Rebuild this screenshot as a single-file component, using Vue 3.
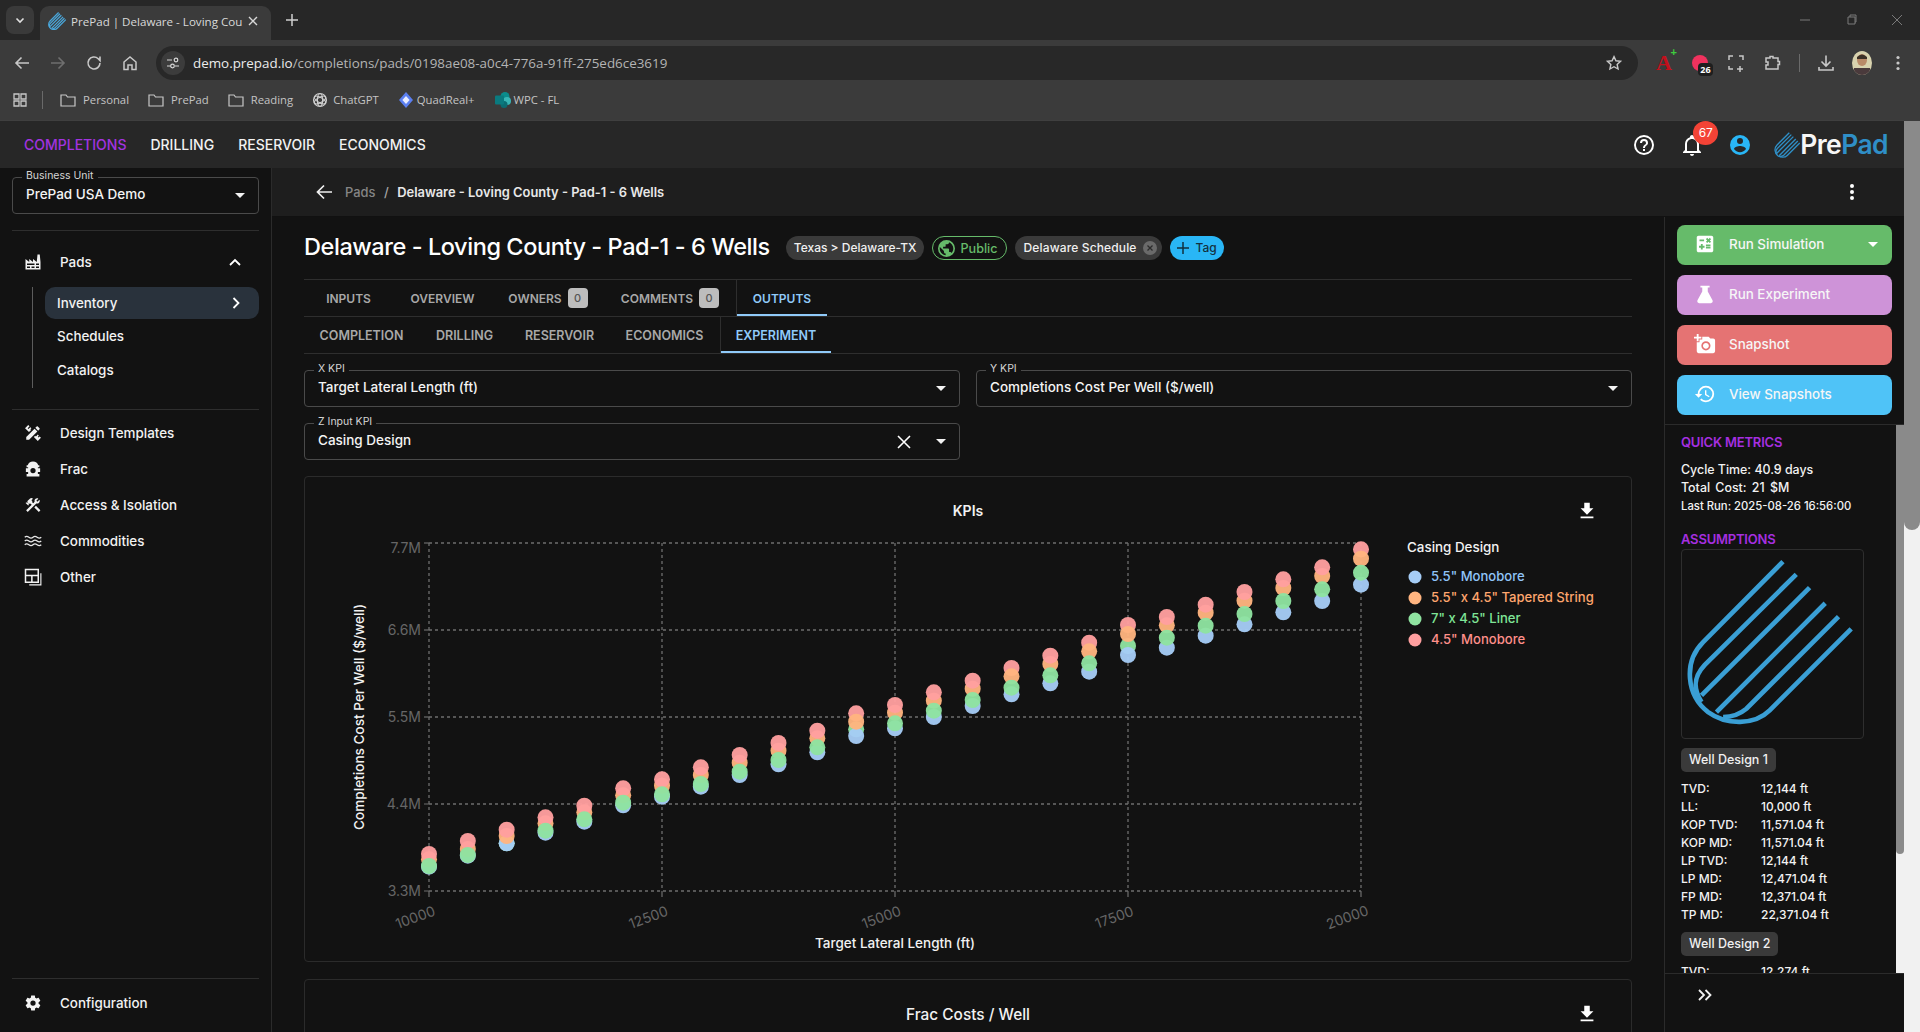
<script setup>
const P = {
  factory: 'M4,18V20H8V18H4M4,14V16H14V14H4M10,18V20H14V18H10M16,14V16H20V14H16M16,18V20H20V18H16M2,22V8L7,12V8L12,12V8L17,12L18,2H21L22,12V22H2Z',
  ruler: 'M3 17.25V21H6.75L17.81 9.93L14.06 6.18L3 17.25M22.61 18.36L18.36 22.61L13.16 17.41L14.93 15.64L15.93 16.64L18.4 14.16L19.82 15.58L18.36 17L19.42 18L20.84 16.6L22.61 18.36M6.61 10.83L1.39 5.64L5.64 1.39L7.4 3.16L4.93 5.64L6 6.7L8.46 4.22L9.88 5.64L8.46 7.05L9.46 8.05L6.61 10.83M20.71 7C21.1 6.61 21.1 6 20.71 5.59L18.37 3.29C18 2.9 17.35 2.9 16.96 3.29L15.12 5.12L18.87 8.87L20.71 7Z',
  hydrant: 'M12 2c-3.6 0-6.3 2-7 5H3.5v2.5H5.5V11H2.5v5h3v2.5H3.5V22h17v-3.5h-2V16h3v-5h-3V9.5h2V7H19c-.7-3-3.4-5-7-5Z M12 10.5a3.5 3.5 0 1 1 0 7 3.5 3.5 0 0 1 0-7Z',
  hammer: 'M13.78 15.3L19.78 21.3L21.89 19.14L15.89 13.14L13.78 15.3M17.5 10.1C17.11 10.1 16.69 10.05 16.36 9.91L4.97 21.25L2.86 19.14L10.27 11.74L8.5 9.96L7.78 10.66L6.33 9.25V12.11L5.63 12.81L2.11 9.25L2.81 8.55H5.62L4.22 7.14L7.78 3.58C8.95 2.41 10.83 2.41 12 3.58L9.89 5.74L11.3 7.14L10.59 7.85L12.38 9.63L14.2 7.75C14.06 7.42 14 7 14 6.63C14 4.66 15.56 3.11 17.5 3.11C18.09 3.11 18.61 3.25 19.08 3.53L16.41 6.2L17.91 7.7L20.58 5.03C20.86 5.5 21 6 21 6.63C21 8.55 19.45 10.1 17.5 10.1Z',
  cog: 'M12,15.5A3.5,3.5 0 0,1 8.5,12A3.5,3.5 0 0,1 12,8.5A3.5,3.5 0 0,1 15.5,12A3.5,3.5 0 0,1 12,15.5M19.43,12.97C19.47,12.65 19.5,12.33 19.5,12C19.5,11.67 19.47,11.34 19.43,11L21.54,9.37C21.73,9.22 21.78,8.95 21.66,8.73L19.66,5.27C19.54,5.05 19.27,4.96 19.05,5.05L16.56,6.05C16.04,5.66 15.5,5.32 14.87,5.07L14.5,2.42C14.46,2.18 14.25,2 14,2H10C9.75,2 9.54,2.18 9.5,2.42L9.13,5.07C8.5,5.32 7.96,5.66 7.44,6.05L4.95,5.05C4.73,4.96 4.46,5.05 4.34,5.27L2.34,8.73C2.21,8.95 2.27,9.22 2.46,9.37L4.57,11C4.53,11.34 4.5,11.67 4.5,12C4.5,12.33 4.53,12.65 4.57,12.97L2.46,14.63C2.27,14.78 2.21,15.05 2.34,15.27L4.34,18.73C4.46,18.95 4.73,19.03 4.95,18.95L7.44,17.94C7.96,18.34 8.5,18.68 9.13,18.93L9.5,21.58C9.54,21.82 9.75,22 10,22H14C14.25,22 14.46,21.82 14.5,21.58L14.87,18.93C15.5,18.67 16.04,18.34 16.56,17.94L19.05,18.95C19.27,19.03 19.54,18.95 19.66,18.73L21.66,15.27C21.78,15.05 21.73,14.78 21.54,14.63L19.43,12.97Z',
  calc: 'M5 3H19C20.1 3 21 3.9 21 5V19C21 20.1 20.1 21 19 21H5C3.9 21 3 20.1 3 19V5C3 3.9 3.9 3 5 3M6 7V9H11V7H6M13 15V17H18V15H13M13 12.5V14.5H18V12.5H13M7.5 18H9.5V16H11.5V14H9.5V12H7.5V14H5.5V16H7.5V18M14.41 10.95L15.82 9.54L17.23 10.95L18.64 9.54L17.23 8.12L18.64 6.71L17.23 5.29L15.82 6.71L14.41 5.29L13 6.71L14.41 8.12L13 9.54L14.41 10.95Z',
  flask: 'M7 3h10v2h-2v4.3l5.2 9.6c.7 1.4-.2 3.1-1.8 3.1H5.6c-1.6 0-2.5-1.7-1.8-3.1L9 9.3V5H7z',
  camera: 'M3,4V1H5V4H8V6H5V9H3V6H0V4M6,10V7H9V4H16L17.83,6H21A2,2 0 0,1 23,8V20A2,2 0 0,1 21,22H5A2,2 0 0,1 3,20V10M13,19A5,5 0 0,0 18,14A5,5 0 0,0 13,9A5,5 0 0,0 8,14A5,5 0 0,0 13,19M9.8,14C9.8,15.77 11.23,17.2 13,17.2C14.77,17.2 16.2,15.77 16.2,14C16.2,12.23 14.77,10.8 13,10.8C11.23,10.8 9.8,12.23 9.8,14Z',
  history: 'M13.5,8H12V13L16.28,15.54L17,14.33L13.5,12.25V8M13,3A9,9 0 0,0 4,12H1L4.96,16.03L9,12H6A7,7 0 0,1 13,5A7,7 0 0,1 20,12A7,7 0 0,1 13,19C11.07,19 9.32,18.21 8.06,16.94L6.64,18.36C8.27,20 10.5,21 13,21A9,9 0 0,0 22,12A9,9 0 0,0 13,3',
  help: 'M11,18H13V16H11V18M12,2A10,10 0 0,0 2,12A10,10 0 0,0 12,22A10,10 0 0,0 22,12A10,10 0 0,0 12,2M12,20C7.59,20 4,16.41 4,12C4,7.59 7.59,4 12,4C16.41,4 20,7.59 20,12C20,16.41 16.41,20 12,20M12,6A4,4 0 0,0 8,10H10A2,2 0 0,1 12,8A2,2 0 0,1 14,10C14,12 11,11.75 11,15H13C13,12.75 16,12.5 16,10A4,4 0 0,0 12,6Z',
  bell: 'M10 21H14C14 22.1 13.1 23 12 23S10 22.1 10 21M21 19V20H3V19L5 17V11C5 7.9 7 5.2 10 4.3V4C10 2.9 10.9 2 12 2S14 2.9 14 4V4.3C17 5.2 19 7.9 19 11V17L21 19M17 11C17 8.2 14.8 6 12 6S7 8.2 7 11V18H17V11Z',
  user: 'M12,19.2C9.5,19.2 7.29,17.92 6,16C6.03,14 10,12.9 12,12.9C14,12.9 17.97,14 18,16C16.71,17.92 14.5,19.2 12,19.2M12,5A3,3 0 0,1 15,8A3,3 0 0,1 12,11A3,3 0 0,1 9,8A3,3 0 0,1 12,5M12,2A10,10 0 0,0 2,12A10,10 0 0,0 12,22A10,10 0 0,0 22,12A10,10 0 0,0 12,2Z',
  download: 'M5,20H19V18H5M19,9H15V3H9V9H5L12,16L19,9Z',
  earth: 'M17.9,17.39C17.64,16.59 16.89,16 16,16H15V13A1,1 0 0,0 14,12H8V10H10A1,1 0 0,0 11,9V7H13A2,2 0 0,0 15,5V4.59C17.93,5.77 20,8.64 20,12C20,14.08 19.2,15.97 17.9,17.39M11,19.93C7.05,19.44 4,16.08 4,12C4,11.38 4.08,10.78 4.21,10.21L9,15V16A2,2 0 0,0 11,18M12,2A10,10 0 0,0 2,12A10,10 0 0,0 12,22A10,10 0 0,0 22,12A10,10 0 0,0 12,2Z',
  kebab: 'M12,16A2,2 0 0,1 14,18A2,2 0 0,1 12,20A2,2 0 0,1 10,18A2,2 0 0,1 12,16M12,10A2,2 0 0,1 14,12A2,2 0 0,1 12,14A2,2 0 0,1 10,12A2,2 0 0,1 12,10M12,4A2,2 0 0,1 14,6A2,2 0 0,1 12,8A2,2 0 0,1 10,6A2,2 0 0,1 12,4Z',
}

const mark = [
  'M370 68 L130 310 C70 370 80 470 145 520 C200 560 285 560 330 515 L575 270',
  'M410 106 L135 378 C100 415 100 450 125 490',
  'M450 146 L125 470',
  'M497 193 L170 520',
  'M537 233 L260 510 Q230 535 190 535',
]

const navItems = [
  { label: 'Design Templates', d: P.ruler },
  { label: 'Frac', d: P.hydrant, evenodd: true },
  { label: 'Access & Isolation', d: P.hammer },
  { label: 'Commodities', waves: true },
  { label: 'Other', dock: true },
]

const tabs = [
  { label: 'INPUTS', w: 89 },
  { label: 'OVERVIEW', w: 99 },
  { label: 'OWNERS', w: 112, badge: 0 },
  { label: 'COMMENTS', w: 133, badge: 0, sep: true },
  { label: 'OUTPUTS', w: 90, active: true },
]
const subTabs = [
  { label: 'COMPLETION', w: 115 },
  { label: 'DRILLING', w: 91 },
  { label: 'RESERVOIR', w: 99 },
  { label: 'ECONOMICS', w: 112, sep: true },
  { label: 'EXPERIMENT', w: 110, active: true },
]

const bookmarks = [
  { label: 'Personal', type: 'folder' },
  { label: 'PrePad', type: 'folder' },
  { label: 'Reading', type: 'folder' },
  { label: 'ChatGPT', type: 'gpt' },
  { label: 'QuadReal+', type: 'quad' },
  { label: 'WPC - FL', type: 'share' },
]

const buttons = [
  { label: 'Run Simulation', d: P.calc, cls: 'green', caret: true },
  { label: 'Run Experiment', d: P.flask, cls: 'purple' },
  { label: 'Snapshot', d: P.camera, cls: 'red' },
  { label: 'View Snapshots', d: P.history, cls: 'blue' },
]

const wells = [
  ['TVD:', '12,144 ft'], ['LL:', '10,000 ft'], ['KOP TVD:', '11,571.04 ft'], ['KOP MD:', '11,571.04 ft'],
  ['LP TVD:', '12,144 ft'], ['LP MD:', '12,471.04 ft'], ['FP MD:', '12,371.04 ft'], ['TP MD:', '22,371.04 ft'],
]

const series = {
  blue: { color: '#a5ccf6', text: '#90c4f9', name: '5.5" Monobore', y: [866.7,855.7,843.3,832.7,821.7,805.3,796.7,786.7,775,764.3,752.3,736,728.3,717,706,694.3,683.3,671.7,655,647.7,635.7,624.3,612.3,601,584.7] },
  orange: { color: '#ffb47f', text: '#ffa66e', name: '5.5" x 4.5" Tapered String', y: [859.3,849,836,823.3,812.3,795.3,785.7,775,762.7,750.7,738.3,721.7,712.7,700.7,688.7,676.3,664,651.3,634,625.3,612.7,600.7,588,576,558.7] },
  green: { color: '#8fe3a0', text: '#7fe597', name: '7" x 4.5" Liner', y: [866,855,843.3,830.7,819.3,802.7,794.3,784,771.7,760,747.3,729.3,723.3,710.7,700,687.7,675.3,663.3,646,637.7,625.7,614,601,589.3,572.7] },
  pink: { color: '#ff9f9f', text: '#ff8f8a', name: '4.5" Monobore', y: [854,841,829.7,817.3,805.7,788.3,779.3,767.3,755,743,730.7,713.3,705,692.3,680.7,668,655.7,642.7,625,617,604.7,592,579.3,567.3,549.3] },
}
const legend = ['blue', 'orange', 'green', 'pink'].map((k) => series[k])

const orangeOnTop = new Set([11, 15, 17, 18, 24])
const blueOverGreen = new Set([2, 11, 18])
const points = []
for (let i = 0; i < 25; i++) {
  const top = orangeOnTop.has(i) ? ['pink', 'orange'] : ['orange', 'pink']
  const order = blueOverGreen.has(i) ? ['green', 'blue', ...top] : ['blue', ...top, 'green']
  for (const k of order) {
    points.push({ key: `${i}-${k}`, cx: 429 + (932 / 24) * i, cy: series[k].y[i], fill: series[k].color })
  }
}
const gridY = [
  { y: 543, label: '7.7M', ly: 553 },
  { y: 630, label: '6.6M', ly: 635 },
  { y: 717, label: '5.5M', ly: 722 },
  { y: 804, label: '4.4M', ly: 809 },
  { y: 891, label: '3.3M', ly: 896 },
]
const gridX = [
  { x: 429, label: '10000' },
  { x: 662, label: '12500' },
  { x: 895, label: '15000' },
  { x: 1128, label: '17500' },
  { x: 1361, label: '20000' },
]
</script>

<template>
  <div class="page">
    <header class="chrome">
      <div class="tabstrip">
        <div class="tab-menu">
          <svg width="12" height="12" viewBox="0 0 12 12"><path d="M2.5 4.5 6 8l3.5-3.5" fill="none" stroke="#e0e0e0" stroke-width="1.6"/></svg>
        </div>
        <div class="browser-tab">
          <svg class="fav" width="18" height="18" viewBox="70 60 510 500"><path v-for="d in mark" :key="d" :d="d" fill="none" stroke="#4aa8dc" stroke-width="34"/></svg>
          <span class="tab-title">PrePad | Delaware - Loving Cou</span>
          <svg width="12" height="12" viewBox="0 0 12 12"><path d="M2 2l8 8M10 2l-8 8" stroke="#d8d8d8" stroke-width="1.4"/></svg>
        </div>
        <svg class="newtab" width="14" height="14" viewBox="0 0 14 14"><path d="M7 1v12M1 7h12" stroke="#cfcfcf" stroke-width="1.5"/></svg>
        <div class="winctl">
          <svg width="12" height="12" viewBox="0 0 12 12"><path d="M1 6h10" stroke="#7a7a7a"/></svg>
          <svg width="12" height="12" viewBox="0 0 12 12"><path d="M3 3h7v7H3zM5 3V1h6v7h-1" fill="none" stroke="#7a7a7a"/></svg>
          <svg width="12" height="12" viewBox="0 0 12 12"><path d="M1 1l10 10M11 1 1 11" stroke="#7a7a7a"/></svg>
        </div>
      </div>
      <div class="toolbar">
        <div class="tool-nav">
          <svg width="18" height="18" viewBox="0 0 18 18"><path d="M16 9H3M8.5 3.5 3 9l5.5 5.5" fill="none" stroke="#c8c8c8" stroke-width="1.6"/></svg>
          <svg width="18" height="18" viewBox="0 0 18 18"><path d="M2 9h13M9.5 3.5 15 9l-5.5 5.5" fill="none" stroke="#6f6f6f" stroke-width="1.6"/></svg>
          <svg width="18" height="18" viewBox="0 0 18 18"><path d="M15 9a6 6 0 1 1-1.8-4.3L15 6.5V2.5" fill="none" stroke="#c8c8c8" stroke-width="1.6"/></svg>
          <svg width="18" height="18" viewBox="0 0 18 18"><path d="M3 8 9 3l6 5v7.5h-4v-4.5H7v4.5H3z" fill="none" stroke="#c8c8c8" stroke-width="1.5"/></svg>
        </div>
        <div class="omnibox">
          <span class="site-info">
            <svg width="14" height="14" viewBox="0 0 14 14"><path d="M1 4h5M9 10h4M1 10h4" stroke="#d8d8d8" stroke-width="1.2"/><circle cx="10" cy="4" r="1.8" fill="none" stroke="#d8d8d8" stroke-width="1.2"/><circle cx="6.5" cy="10" r="1.8" fill="none" stroke="#d8d8d8" stroke-width="1.2"/></svg>
          </span>
          <span class="url"><span class="url-host">demo.prepad.io</span>/completions/pads/0198ae08-a0c4-776a-91ff-275ed6ce3619</span>
          <svg width="18" height="18" viewBox="0 0 24 24"><path d="M12 3.5l2.6 5.6 6.1.7-4.5 4.2 1.2 6L12 17l-5.4 3 1.2-6-4.5-4.2 6.1-.7z" fill="none" stroke="#c8c8c8" stroke-width="1.9"/></svg>
        </div>
        <div class="ext-row">
          <span class="slot"><span class="ext-a">A<i>+</i></span></span>
          <span class="slot"><span class="ext-pin"><span class="ext-num">26</span></span></span>
          <span class="slot"><svg width="18" height="18" viewBox="0 0 18 18"><path d="M6 2H2v4M2 12v3h4M12 2h4v4M10 15h6M13 12v6" fill="none" stroke="#c8c8c8" stroke-width="1.5"/></svg></span>
          <span class="slot"><svg width="18" height="18" viewBox="0 0 18 18"><path d="M3 4h4V2.5h3V4h5v3.5h1.5v3H15V15H3v-4h2V8H3z" fill="none" stroke="#c8c8c8" stroke-width="1.5"/></svg></span>
          <span class="slot narrow"><span class="ext-sep"></span></span>
          <span class="slot"><svg width="18" height="18" viewBox="0 0 18 18"><path d="M9 1.5v10M4.5 7.5 9 12l4.5-4.5M2 13v3h14v-3" fill="none" stroke="#c8c8c8" stroke-width="1.6"/></svg></span>
          <span class="slot"><svg width="20" height="24" viewBox="0 0 20 24"><defs><clipPath id="av"><ellipse cx="10" cy="12" rx="10" ry="12"/></clipPath></defs><g clip-path="url(#av)"><rect width="20" height="24" fill="#d8d2ae"/><ellipse cx="10" cy="9" rx="5" ry="6" fill="#b98a68"/><path d="M5 6q5-5 10 0v2H5z" fill="#3c3026"/><rect x="2" y="17" width="16" height="7" fill="#4a3a3c"/></g></svg></span>
          <span class="slot"><svg width="16" height="18" viewBox="0 0 16 18"><circle cx="8" cy="3.5" r="1.6" fill="#c8c8c8"/><circle cx="8" cy="9" r="1.6" fill="#c8c8c8"/><circle cx="8" cy="14.5" r="1.6" fill="#c8c8c8"/></svg></span>
        </div>
      </div>
      <div class="bookmarks">
        <svg width="16" height="16" viewBox="0 0 16 16"><path d="M2 2h5v5H2zM9 2h5v5H9zM2 9h5v5H2zM9 9h5v5H9z" fill="none" stroke="#c8c8c8" stroke-width="1.3"/></svg>
        <span class="bm-sep"></span>
        <span v-for="b in bookmarks" :key="b.label" class="bm" :class="'bm-' + b.type">
          <svg v-if="b.type === 'folder'" width="16" height="14" viewBox="0 0 16 14"><path d="M1 2h5l1.5 2H15v9H1z" fill="none" stroke="#c8c8c8" stroke-width="1.2"/></svg>
          <svg v-else-if="b.type === 'gpt'" width="16" height="16" viewBox="0 0 16 16"><g fill="none" stroke="#cfcfcf" stroke-width="1.1"><circle cx="8" cy="8" r="6.5"/><ellipse cx="8" cy="8" rx="6.2" ry="2.6" transform="rotate(30 8 8)"/><ellipse cx="8" cy="8" rx="6.2" ry="2.6" transform="rotate(90 8 8)"/><ellipse cx="8" cy="8" rx="6.2" ry="2.6" transform="rotate(150 8 8)"/></g></svg>
          <svg v-else-if="b.type === 'quad'" width="16" height="18" viewBox="0 0 16 18"><path d="M8 1l7 8-7 8-7-8z" fill="#5b7ff0"/><path d="M8 5l3.6 4L8 13 4.4 9z" fill="#e8ecff"/></svg>
          <svg v-else width="18" height="18" viewBox="0 0 18 18"><circle cx="11" cy="5.5" r="4.5" fill="#0b8c8c"/><circle cx="13" cy="10" r="4" fill="#38b6b6"/><circle cx="10" cy="13.5" r="3.5" fill="#0b6c72"/><rect x="1" y="4.5" width="9" height="9" rx="1" fill="#0a7a7f"/></svg>
          <span>{{ b.label }}</span>
        </span>
      </div>
    </header>

    <div class="app">
      <div class="app-col">
        <div class="appbar">
          <nav class="appnav">
            <span class="nav-active">COMPLETIONS</span>
            <span>DRILLING</span>
            <span>RESERVOIR</span>
            <span>ECONOMICS</span>
          </nav>
          <div class="appbar-right">
            <svg class="ico" width="24" height="24" viewBox="0 0 24 24"><path :d="P.help" fill="#fff"/></svg>
            <span class="bell">
              <svg width="24" height="24" viewBox="0 0 24 24"><path :d="P.bell" fill="#fff"/></svg>
              <span class="bell-badge">67</span>
            </span>
            <svg width="24" height="24" viewBox="0 0 24 24"><path :d="P.user" fill="#29b6f6"/></svg>
            <span class="brand">
              <svg width="26" height="26" viewBox="70 60 510 500"><path v-for="d in mark" :key="d" :d="d" fill="none" stroke="#2f8fc7" stroke-width="26"/></svg>
              <span class="brand-text">Pre<b>Pad</b></span>
            </span>
          </div>
        </div>

        <div class="body">
          <aside class="sidebar">
            <div class="field bu">
              <label>Business Unit</label>
              <span class="field-value">PrePad USA Demo</span>
              <span class="caret"></span>
            </div>
            <hr class="side-div first" />
            <div class="nav-row">
              <svg class="nav-ico" width="18" height="18" viewBox="0 0 24 24"><path :d="P.factory" fill="#f2f2f2"/></svg>
              <span>Pads</span>
              <svg class="nav-chev" width="14" height="14" viewBox="0 0 14 14"><path d="M2 10l5-5 5 5" fill="none" stroke="#fff" stroke-width="1.8"/></svg>
            </div>
            <div class="subnav">
              <div class="sub-item current">
                <span>Inventory</span>
                <svg width="14" height="14" viewBox="0 0 14 14"><path d="M4.5 2l5 5-5 5" fill="none" stroke="#fff" stroke-width="1.8"/></svg>
              </div>
              <div class="sub-item">Schedules</div>
              <div class="sub-item">Catalogs</div>
            </div>
            <hr class="side-div second" />
            <div v-for="n in navItems" :key="n.label" class="nav-row tight">
              <svg class="nav-ico" width="18" height="18" viewBox="0 0 24 24">
                <path v-if="n.d" :d="n.d" fill="#f2f2f2" :fill-rule="n.evenodd ? 'evenodd' : 'nonzero'"/>
                <g v-else-if="n.waves" fill="none" stroke="#e8e8e8" stroke-width="1.6">
                  <path d="M1 7q2.5-2.5 5.5 0t5.5 0 5.5 0 5.5 0"/>
                  <path d="M1 12q2.5-2.5 5.5 0t5.5 0 5.5 0 5.5 0"/>
                  <path d="M1 17q2.5-2.5 5.5 0t5.5 0 5.5 0 5.5 0"/>
                </g>
                <g v-else fill="none" stroke="#f2f2f2" stroke-width="2">
                  <path d="M2 2h17v17H2zM2 10h17M10.5 10v9"/>
                  <path d="M22.5 7v15.5H7" stroke-width="1.5"/>
                </g>
              </svg>
              <span>{{ n.label }}</span>
            </div>
            <div class="side-foot">
              <div class="nav-row foot">
                <svg class="nav-ico" width="18" height="18" viewBox="0 0 24 24"><path :d="P.cog" fill="#f2f2f2"/></svg>
                <span>Configuration</span>
              </div>
            </div>
          </aside>

          <div class="workspace">
            <div class="crumbs">
              <svg width="18" height="18" viewBox="0 0 18 18"><path d="M17 9H2.5M9 2.5 2.5 9 9 15.5" fill="none" stroke="#f0f0f0" stroke-width="1.7"/></svg>
              <span class="crumb-muted">Pads</span>
              <span class="crumb-slash">/</span>
              <span class="crumb-cur">Delaware - Loving County - Pad-1 - 6 Wells</span>
              <svg class="crumb-kebab" width="24" height="24" viewBox="0 0 24 24"><path :d="P.kebab" fill="#fff"/></svg>
            </div>
            <div class="work-row">
              <main class="content">
                <div class="title-row">
                  <h1>Delaware - Loving County - Pad-1 - 6 Wells</h1>
                  <span class="chip">Texas &gt; Delaware-TX</span>
                  <span class="chip public">
                    <svg width="17" height="17" viewBox="2 2 20 20"><path :d="P.earth" fill="#66bb6a"/></svg>
                    Public
                  </span>
                  <span class="chip sched">
                    Delaware Schedule
                    <svg width="14" height="14" viewBox="0 0 14 14"><circle cx="7" cy="7" r="7" fill="#6a6a6a"/><path d="M4.5 4.5l5 5M9.5 4.5l-5 5" stroke="#2c2c2c" stroke-width="1.3"/></svg>
                  </span>
                  <span class="chip tag">
                    <svg width="12" height="12" viewBox="0 0 12 12"><path d="M6 0v12M0 6h12" stroke="#10303f" stroke-width="1.5"/></svg>
                    Tag
                  </span>
                </div>

                <div class="tabs top">
                  <div v-for="t in tabs" :key="t.label" class="t" :class="{ on: t.active, sep: t.sep }" :style="{ width: t.w + 'px' }">
                    {{ t.label }}<span v-if="t.badge !== undefined" class="t-badge">{{ t.badge }}</span>
                  </div>
                </div>
                <div class="tabs sub">
                  <div v-for="t in subTabs" :key="t.label" class="t" :class="{ on: t.active, sep: t.sep }" :style="{ width: t.w + 'px' }">{{ t.label }}</div>
                </div>

                <div class="fields">
                  <div class="field">
                    <label>X KPI</label>
                    <span class="field-value">Target Lateral Length (ft)</span>
                    <span class="caret"></span>
                  </div>
                  <div class="field">
                    <label>Y KPI</label>
                    <span class="field-value">Completions Cost Per Well ($/well)</span>
                    <span class="caret"></span>
                  </div>
                  <div class="field">
                    <label>Z Input KPI</label>
                    <span class="field-value">Casing Design</span>
                    <svg class="clear" width="16" height="16" viewBox="0 0 16 16"><path d="M2 2l12 12M14 2 2 14" stroke="#fff" stroke-width="1.6"/></svg>
                    <span class="caret"></span>
                  </div>
                </div>

                <section class="card chart-card">
                  <div class="card-head">
                    <span class="card-title">KPIs</span>
                    <svg class="card-dl" width="22" height="22" viewBox="0 0 24 24"><path :d="P.download" fill="#fff"/></svg>
                  </div>
                  <svg class="chart" width="1326" height="450" viewBox="305 512 1326 450">
                    <g fill="none" stroke="#6e6e6e" stroke-width="1.3" stroke-dasharray="3 3">
                      <line v-for="g in gridY" :key="g.y" x1="429" x2="1361" :y1="g.y" :y2="g.y"/>
                      <line v-for="g in gridX" :key="g.x" :x1="g.x" :x2="g.x" y1="543" y2="891"/>
                    </g>
                    <g stroke="#6e6e6e" stroke-width="1.2">
                      <line v-for="g in gridY" :key="'t' + g.y" x1="424" x2="429" :y1="g.y" :y2="g.y"/>
                      <line v-for="g in gridX" :key="'t' + g.x" :x1="g.x" :x2="g.x" y1="891" y2="897"/>
                    </g>
                    <circle v-for="p in points" :key="p.key" :cx="p.cx" :cy="p.cy" r="8" :fill="p.fill" fill-opacity=".96"/>
                    <text v-for="g in gridY" :key="'l' + g.y" class="axis" x="421" :y="g.ly" text-anchor="end">{{ g.label }}</text>
                    <text v-for="g in gridX" :key="'l' + g.x" class="axis" text-anchor="middle" :transform="`translate(${g.x - 12} 922) rotate(-20)`">{{ g.label }}</text>
                    <text class="axis-title" x="895" y="948" text-anchor="middle">Target Lateral Length (ft)</text>
                    <text class="axis-title ytitle" text-anchor="middle" transform="translate(364 717) rotate(-90)">Completions Cost Per Well ($/well)</text>
                    <text class="legend-title" x="1407" y="552">Casing Design</text>
                    <g v-for="(s, i) in legend" :key="s.name">
                      <circle cx="1415" :cy="577 + i * 21" r="6.5" :fill="s.color"/>
                      <text class="legend-text" x="1431" :y="581 + i * 21" :fill="s.text">{{ s.name }}</text>
                    </g>
                  </svg>
                </section>

                <section class="card next-card">
                  <div class="card-head">
                    <span class="card-title big">Frac Costs / Well</span>
                    <svg class="card-dl" width="22" height="22" viewBox="0 0 24 24"><path :d="P.download" fill="#fff"/></svg>
                  </div>
                </section>
              </main>

              <aside class="panel">
                <div class="panel-actions">
                  <button v-for="b in buttons" :key="b.label" class="act" :class="b.cls">
                    <svg width="22" height="22" viewBox="0 0 24 24"><path :d="b.d" fill="#fff"/></svg>
                    <span>{{ b.label }}</span>
                    <span v-if="b.caret" class="caret white"></span>
                  </button>
                </div>
                <div class="panel-scroll">
                  <div class="panel-inner">
                    <h3>QUICK METRICS</h3>
                    <p class="metric m1">Cycle Time: 40.9 days</p>
                    <p class="metric m2">Total Cost: 21 $M</p>
                    <p class="metric m3">Last Run: 2025-08-26 16:56:00</p>
                    <h3 class="assump">ASSUMPTIONS</h3>
                    <div class="logo-box">
                      <svg width="182" height="189" viewBox="64 30 546 568"><path v-for="d in mark" :key="d" :d="d" fill="none" stroke="#3a9fd5" stroke-width="14"/></svg>
                    </div>
                    <span class="design">Well Design 1</span>
                    <div v-for="w in wells" :key="w[0]" class="well-row"><span>{{ w[0] }}</span><span>{{ w[1] }}</span></div>
                    <span class="design second">Well Design 2</span>
                    <div class="well-row"><span>TVD:</span><span>12,274 ft</span></div>
                  </div>
                  <div class="thin-track"><div class="thin-thumb"></div></div>
                </div>
                <div class="panel-foot">
                  <svg width="16" height="14" viewBox="0 0 16 14"><path d="M2 2l5 5-5 5M8.5 2l5 5-5 5" fill="none" stroke="#f2f2f2" stroke-width="1.8"/></svg>
                </div>
              </aside>
            </div>
          </div>
        </div>
      </div>
      <div class="page-track"><div class="page-thumb"></div></div>
    </div>
  </div>
</template>

<style>
html, body { margin: 0; height: 100%; overflow: hidden; background: #121212; }
</style>

<style scoped>
.page { height: 1032px; display: flex; flex-direction: column; overflow: hidden; background: #121212; color: #f2f2f2; font-family: Inter, "Liberation Sans", sans-serif; font-size: 13.4px; }
.chrome { font-family: "Open Sans", "Liberation Sans", sans-serif; flex: none; height: 121px; background: #3b3b3b; }
.tabstrip { height: 40px; background: #272727; display: flex; align-items: flex-start; position: relative; }
.tab-menu { width: 28px; height: 28px; margin: 6px 6px 0; background: #3a3a3a; border-radius: 8px; display: flex; align-items: center; justify-content: center; }
.browser-tab { width: 231px; height: 34px; margin-top: 6px; background: #3b3b3b; border-radius: 9px 9px 0 0; display: flex; align-items: center; padding: 0 8px 4px; box-sizing: border-box; font-size: 11.6px; color: #d9d9d9; }
.fav { flex: none; }
.tab-title { width: 167px; margin: 0 9px 0 5px; white-space: nowrap; }
.newtab { margin: 13px 0 0 14px; }
.winctl { margin-left: auto; display: flex; gap: 34px; padding: 14px 17px 0 0; }
.toolbar { height: 40px; display: flex; align-items: flex-end; }
.tool-nav { width: 156px; height: 34px; box-sizing: border-box; padding-left: 13px; display: flex; align-items: center; gap: 18px; }
.omnibox { width: 1482px; height: 34px; box-sizing: border-box; background: #282828; border-radius: 17px; display: flex; align-items: center; padding: 0 15px 0 5px; }
.site-info { width: 24px; height: 24px; border-radius: 50%; background: #3c3c3c; display: flex; align-items: center; justify-content: center; }
.url { flex: 1; margin-left: 8px; font-size: 13.4px; color: #b4b4b4; }
.url-host { color: #ececec; }
.ext-row { flex: 1; height: 34px; display: flex; align-items: center; padding-left: 8px; }
.slot { width: 36px; flex: none; display: flex; align-items: center; justify-content: center; }
.slot.narrow { width: 18px; }
.ext-a { width: 18px; font: 700 22px "Liberation Serif", serif; color: #c4101c; position: relative; text-align: center; line-height: 24px; }
.ext-a i { position: absolute; top: -5px; right: -4px; font: 700 11px "Liberation Sans", sans-serif; color: #3ecb3e; }
.ext-pin { width: 16px; height: 16px; border-radius: 50%; background: #f0325e; position: relative; }
.ext-num { position: absolute; left: 6px; top: 8px; width: 15px; height: 13px; background: #1e1e1e; border-radius: 4px; font-size: 9px; font-weight: 700; color: #fff; text-align: center; line-height: 13px; }
.ext-sep { width: 1px; height: 18px; background: #6a6a6a; }
.bookmarks { height: 40px; box-sizing: border-box; padding: 0 0 1px 12px; display: flex; align-items: center; font-size: 11.3px; color: #c4c4c4; }
.bm-sep { width: 1px; height: 18px; background: #6a6a6a; margin: 0 17px 0 14px; }
.bm { display: flex; align-items: center; gap: 7px; margin-right: 19px; }
.bm-gpt { gap: 5px; }
.bm-quad { gap: 3px; }
.bm-share { gap: 2px; }

.app { flex: 1; min-height: 0; display: flex; }
.app-col { flex: 1; min-width: 0; display: flex; flex-direction: column; }
.page-track { width: 16px; background: #f1f1f1; flex: none; }
.page-thumb { height: 409px; background: #8a8a8a; border-radius: 0 0 8px 8px; }
.appbar { height: 47px; flex: none; background: #272727; border-top: 1px solid #3f3f3f; box-sizing: content-box; display: flex; align-items: center; justify-content: space-between; margin-top: -1px; }
.appnav { display: flex; gap: 24px; padding-left: 24px; font-size: 14px; font-weight: 500; color: #f2f2f2; }
.nav-active { color: #a233e0; }
.appbar-right { display: flex; align-items: center; gap: 24px; padding-right: 16px; }
.bell { position: relative; display: flex; }
.bell-badge { position: absolute; left: 13px; top: -12px; width: 25px; height: 24px; border-radius: 50%; background: #f44336; color: #fff; font-size: 12px; display: flex; align-items: center; justify-content: center; }
.brand { display: flex; align-items: center; gap: 0; margin-left: -2px; }
.brand-text { font-size: 26.5px; font-weight: 600; color: #f6f6f6; letter-spacing: -.6px; line-height: 1; }
.brand-text b { font-weight: 600; color: #2f8fc7; }

.body { flex: 1; min-height: 0; display: flex; }
.sidebar { width: 272px; flex: none; box-sizing: border-box; border-right: 1px solid #2b2b2b; padding: 9px 12px 0; display: flex; flex-direction: column; }
.field { position: relative; height: 37px; box-sizing: border-box; border: 1px solid #4a4a4a; border-radius: 4px; display: flex; align-items: center; padding: 0 13px; }
.field label { position: absolute; top: -8px; left: 9px; padding: 0 4px; background: #121212; font-size: 10.5px; line-height: 12px; color: #d5d5d5; }
.field-value { flex: 1; font-size: 13.5px; font-weight: 500; color: #f4f4f4; padding-bottom: 3px; }
.caret { width: 0; height: 0; border-left: 5px solid transparent; border-right: 5px solid transparent; border-top: 5px solid #f2f2f2; }
.caret.white { border-top-color: #fff; margin-left: auto; }
.side-div { border: 0; border-top: 1px solid #2e2e2e; margin: 0; }
.side-div.first { margin: 16px 0 0; }
.side-div.second { margin: 21px 0 5px; }
.nav-row { height: 36px; display: flex; align-items: center; font-weight: 500; padding-left: 12px; margin-top: 13px; gap: 18px; }
.nav-row.tight { margin-top: 0; }
.nav-row.foot { margin-top: 6px; }
.nav-ico { flex: none; }
.nav-chev { margin-left: auto; margin-right: 17px; }
.subnav { margin: 7px 0 0 20px; border-left: 1px solid #5c5c5c; padding-left: 12px; height: 101px; }
.sub-item { height: 34px; display: flex; align-items: center; padding: 0 12px; font-weight: 500; border-radius: 10px; justify-content: space-between; }
.sub-item.current { height: 32px; background: #29323c; padding-right: 16px; }
.side-foot { margin-top: auto; border-top: 1px solid #2e2e2e; height: 53px; }

.workspace { flex: 1; min-width: 0; display: flex; flex-direction: column; }
.crumbs { height: 49px; flex: none; box-sizing: border-box; background: #1e1e1e; border-bottom: 1px solid #111; display: flex; align-items: center; padding-left: 43px; font-weight: 500; font-size: 12.9px; }
.crumb-muted { color: #858585; margin-left: 12px; }
.crumb-slash { color: #a5a5a5; margin: 0 8.5px; }
.crumb-cur { color: #e8e8e8; font-weight: 600; }
.crumb-kebab { margin-left: auto; margin-right: 40px; }
.work-row { flex: 1; min-height: 0; display: flex; }
.content { width: 1392px; flex: none; box-sizing: border-box; padding: 19px 32px 0; overflow: hidden; }
.title-row { height: 24px; display: flex; align-items: center; gap: 8px; white-space: nowrap; }
.title-row h1 { margin: -2px 8px 0 0; font-size: 23.5px; font-weight: 500; color: #fff; letter-spacing: -.43px; line-height: 24px; }
.chip { height: 24px; box-sizing: border-box; display: inline-flex; align-items: center; border-radius: 12px; background: #3a3a3a; font-size: 12px; padding: 0 8px 1px; font-weight: 500; color: #f0f0f0; gap: 5px; }
.chip.public { background: transparent; border: 1px solid #66bb6a; color: #66bb6a; padding: 0 8px 0 5px; font-size: 12.6px; }
.chip.sched { padding: 0 5px 1px 9px; gap: 6px; letter-spacing: .14px; }
.chip.tag { background: #29b6f6; color: #14303e; padding: 0 7px 1px; gap: 7px; }

.tabs { height: 37px; box-sizing: border-box; border-bottom: 1px solid #2e2e2e; display: flex; font-size: 12px; font-weight: 600; color: #a8a8a8; }
.tabs.top { margin-top: 19px; border-top: 1px solid #2e2e2e; height: 38px; }
.tabs.sub { font-size: 12.5px; }
.t { flex: none; display: flex; align-items: center; justify-content: center; gap: 6px; box-sizing: border-box; }
.t.sep { border-right: 1px solid #2e2e2e; }
.t.on { color: #90caf9; box-shadow: inset 0 -2px 0 #90caf9; }
.t-badge { width: 20px; height: 20px; border-radius: 4px; background: #bdbdbd; color: #555; font-size: 11px; font-weight: 500; display: flex; align-items: center; justify-content: center; }

.fields { display: grid; grid-template-columns: 1fr 1fr; gap: 16px; margin-top: 16px; }
.clear { margin-right: 24px; }

.card { border: 1px solid #2b2b2b; border-radius: 4px; box-sizing: border-box; }
.chart-card { margin-top: 16px; height: 486px; overflow: hidden; }
.next-card { margin-top: 17px; height: 300px; }
.card-head { display: flex; align-items: center; justify-content: center; position: relative; font-weight: 500; color: #f2f2f2; }
.chart-card .card-head { height: 67px; margin-bottom: -32px; }
.next-card .card-head { height: 68px; }
.card-title { font-weight: 600; font-size: 14px; }
.card-title.big { font-size: 15.4px; font-weight: 500; }
.card-dl { position: absolute; right: 33px; top: 23px; }
.chart { display: block; }
.axis { fill: #666; font-size: 14px; }
.axis-title { fill: #f2f2f2; font-size: 13.5px; font-weight: 500; }
.ytitle { font-size: 13.6px; }
.legend-title { fill: #f2f2f2; font-size: 13.4px; font-weight: 500; }
.legend-text { font-size: 13.1px; font-weight: 500; }

.panel { width: 240px; flex: none; box-sizing: border-box; border-left: 1px solid #2b2b2b; display: flex; flex-direction: column; }
.panel-actions { height: 208px; flex: none; box-sizing: border-box; border-bottom: 1px solid #2b2b2b; padding: 8px 11px 0 12px; display: flex; flex-direction: column; gap: 10px; }
.act { height: 40px; width: 215px; flex: none; border: 0; border-radius: 8px; color: #f6f6f6; font: 500 13.4px Inter, "Liberation Sans", sans-serif; display: flex; align-items: center; padding: 0 14px 2px 17px; gap: 13px; }
.act svg { flex: none; }
.act.green { background: #66bb6a; }
.act.purple { background: #ce93d8; }
.act.red { background: #e57373; }
.act.blue { background: #4fc3f7; }
.panel-scroll { flex: 1; min-height: 0; display: flex; overflow: hidden; }
.panel-inner { flex: 1; min-width: 0; padding: 8px 0 0 16px; overflow: hidden; font-size: 12px; font-weight: 500; }
.panel-inner h3 { margin: 0 0 10px; font-size: 13px; font-weight: 600; color: #a62fe0; line-height: 18px; letter-spacing: -.2px; }
.panel-inner h3.assump { margin: 15px 0 1px; }
.metric { margin: 0; line-height: 18px; color: #f2f2f2; white-space: nowrap; }
.m1 { font-size: 12.4px; }
.m2 { font-size: 12.4px; word-spacing: 2px; }
.m3 { font-size: 11.3px; }
.logo-box { width: 183px; height: 190px; box-sizing: border-box; border: 1px solid #2e2e2e; border-radius: 4px; margin-bottom: 9px; }
.logo-box svg { display: block; margin: -1px; }
.design { display: inline-block; height: 24px; line-height: 24px; padding: 0 8px; background: #3a3a3a; border-radius: 5px; font-size: 12.5px; color: #f0f0f0; margin-bottom: 8px; }
.design.second { margin: 8px 0 7px; }
.well-row { display: grid; grid-template-columns: 80px 1fr; height: 18px; line-height: 18px; }
.thin-track { width: 8px; flex: none; background: #f1f1f1; }
.thin-thumb { height: 429px; background: #8a8a8a; border-radius: 0 0 5px 5px; }
.panel-foot { height: 59px; flex: none; box-sizing: border-box; border-top: 1px solid #2b2b2b; padding: 14px 0 0 32px; }
</style>
